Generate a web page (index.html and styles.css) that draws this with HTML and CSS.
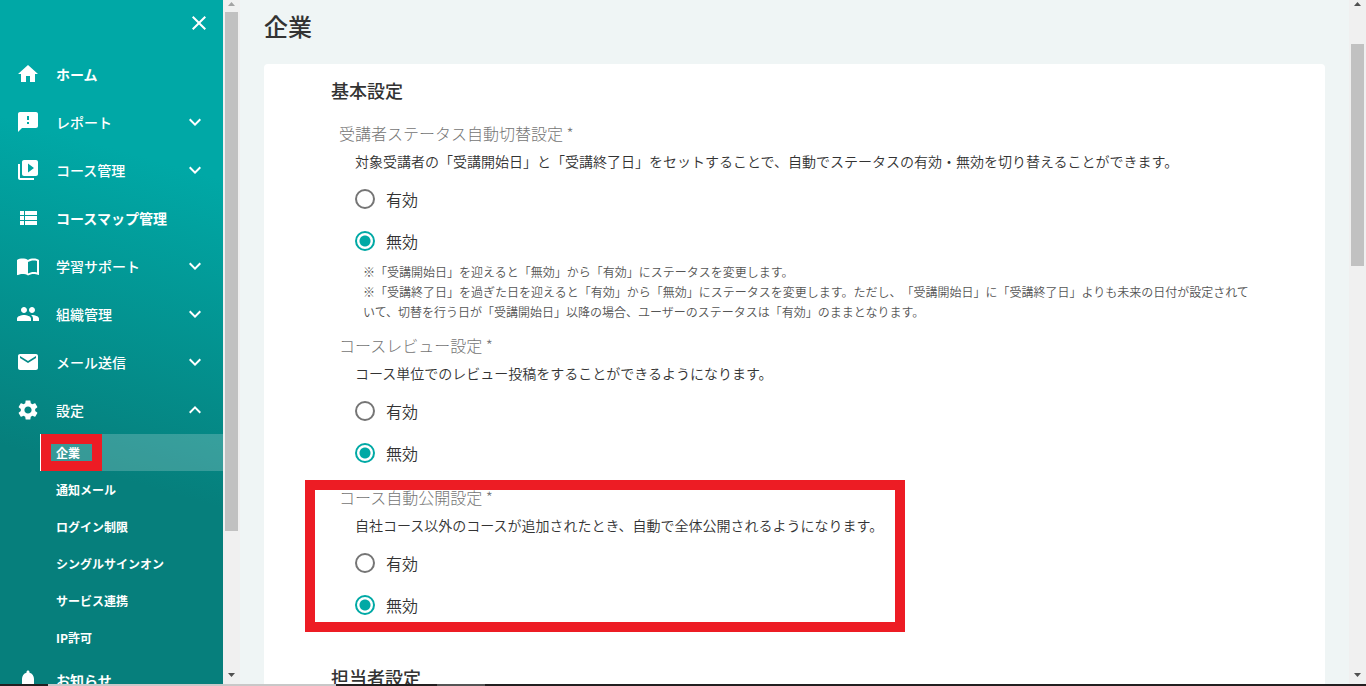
FILE: index.html
```html
<!DOCTYPE html>
<html lang="ja">
<head>
<meta charset="utf-8">
<title>企業</title>
<link rel="stylesheet" href="styles.css">
</head>
<body>
<div class="app">
  <aside class="sidebar">
    <div class="sidebar-head">
      <button class="close" type="button" aria-label="閉じる"><svg class="icon" viewBox="0 0 24 24"><path d="M19 6.41L17.59 5 12 10.59 6.41 5 5 6.41 10.59 12 5 17.59 6.41 19 12 13.41 17.59 19 19 17.59 13.41 12z"/></svg></button>
    </div>
    <nav class="nav">
      <a class="nav-item nav-link" href="#"><svg class="icon" viewBox="0 0 24 24"><path d="M10 20v-6h4v6h5v-8h3L12 3 2 12h3v8z"/></svg><span class="nav-text">ホーム</span></a>
      <a class="nav-item" href="#"><svg class="icon" viewBox="0 0 24 24"><path d="M20 2H4c-1.1 0-1.99.9-1.99 2L2 22l4-4h14c1.1 0 2-.9 2-2V4c0-1.1-.9-2-2-2zm-7 12h-2v-2h2v2zm0-4h-2V6h2v4z"/></svg><span class="nav-text">レポート</span><svg class="chevron" viewBox="0 0 24 24"><path d="M7.41 8.59L12 13.17l4.59-4.58L18 10l-6 6-6-6z"/></svg></a>
      <a class="nav-item" href="#"><svg class="icon" viewBox="0 0 24 24"><path d="M4 6H2v14c0 1.1.9 2 2 2h14v-2H4V6zm16-4H8c-1.1 0-2 .9-2 2v12c0 1.1.9 2 2 2h12c1.1 0 2-.9 2-2V4c0-1.1-.9-2-2-2zm-8 12.5v-9l6 4.5-6 4.5z"/></svg><span class="nav-text">コース管理</span><svg class="chevron" viewBox="0 0 24 24"><path d="M7.41 8.59L12 13.17l4.59-4.58L18 10l-6 6-6-6z"/></svg></a>
      <a class="nav-item nav-link" href="#"><svg class="icon" viewBox="0 0 24 24"><path d="M4 14h4v-4H4v4zm0 5h4v-4H4v4zM4 9h4V5H4v4zm5 5h12v-4H9v4zm0 5h12v-4H9v4zM9 5v4h12V5H9z"/></svg><span class="nav-text">コースマップ管理</span></a>
      <a class="nav-item" href="#"><svg class="icon" viewBox="0 0 24 24"><path d="M21 5c-1.11-.35-2.33-.5-3.5-.5-1.95 0-4.05.4-5.5 1.5-1.45-1.1-3.55-1.5-5.5-1.5S2.45 4.9 1 6v14.65c0 .25.25.5.5.5.1 0 .15-.05.25-.05C3.1 20.45 5.05 20 6.5 20c1.95 0 4.05.4 5.5 1.5 1.35-.85 3.8-1.5 5.5-1.5 1.65 0 3.35.3 4.75 1.05.1.05.15.05.25.05.25 0 .5-.25.5-.5V6c-.6-.45-1.25-.75-2-1zm0 13.5c-1.1-.35-2.3-.5-3.5-.5-1.7 0-4.15.65-5.5 1.5V8c1.35-.85 3.8-1.5 5.5-1.5 1.2 0 2.4.15 3.5.5v11.5z"/></svg><span class="nav-text">学習サポート</span><svg class="chevron" viewBox="0 0 24 24"><path d="M7.41 8.59L12 13.17l4.59-4.58L18 10l-6 6-6-6z"/></svg></a>
      <a class="nav-item" href="#"><svg class="icon" viewBox="0 0 24 24"><path d="M16 11c1.66 0 2.99-1.34 2.99-3S17.66 5 16 5s-3 1.34-3 3 1.34 3 3 3zm-8 0c1.66 0 2.99-1.34 2.99-3S9.66 5 8 5 5 6.34 5 8s1.34 3 3 3zm0 2c-2.33 0-7 1.17-7 3.5V19h14v-2.5c0-2.33-4.67-3.5-7-3.5zm8 0c-.29 0-.62.02-.97.05 1.16.84 1.97 1.97 1.97 3.45V19h6v-2.5c0-2.33-4.67-3.5-7-3.5z"/></svg><span class="nav-text">組織管理</span><svg class="chevron" viewBox="0 0 24 24"><path d="M7.41 8.59L12 13.17l4.59-4.58L18 10l-6 6-6-6z"/></svg></a>
      <a class="nav-item" href="#"><svg class="icon" viewBox="0 0 24 24"><path d="M20 4H4c-1.1 0-1.99.9-1.99 2L2 18c0 1.1.9 2 2 2h16c1.1 0 2-.9 2-2V6c0-1.1-.9-2-2-2zm0 4l-8 5-8-5V6l8 5 8-5v2z"/></svg><span class="nav-text">メール送信</span><svg class="chevron" viewBox="0 0 24 24"><path d="M7.41 8.59L12 13.17l4.59-4.58L18 10l-6 6-6-6z"/></svg></a>
      <a class="nav-item" href="#"><svg class="icon" viewBox="0 0 24 24"><path d="M19.14 12.94c.04-.3.06-.61.06-.94 0-.32-.02-.64-.07-.94l2.03-1.58c.18-.14.23-.41.12-.61l-1.92-3.32c-.12-.22-.37-.29-.59-.22l-2.39.96c-.5-.38-1.03-.7-1.62-.94l-.36-2.54c-.04-.24-.24-.41-.48-.41h-3.84c-.24 0-.43.17-.47.41l-.36 2.54c-.59.24-1.13.57-1.62.94l-2.39-.96c-.22-.08-.47 0-.59.22L2.74 8.87c-.12.21-.08.47.12.61l2.03 1.58c-.05.3-.09.63-.09.94s.02.64.07.94l-2.03 1.58c-.18.14-.23.41-.12.61l1.92 3.32c.12.22.37.29.59.22l2.39-.96c.5.38 1.03.7 1.62.94l.36 2.54c.05.24.24.41.48.41h3.84c.24 0 .44-.17.47-.41l.36-2.54c.59-.24 1.13-.56 1.62-.94l2.39.96c.22.08.47 0 .59-.22l1.92-3.32c.12-.22.07-.47-.12-.61l-2.01-1.58zM12 15.6c-1.98 0-3.6-1.62-3.6-3.6s1.62-3.6 3.6-3.6 3.6 1.62 3.6 3.6-1.62 3.6-3.6 3.6z"/></svg><span class="nav-text">設定</span><svg class="chevron" viewBox="0 0 24 24"><path d="M7.41 15.41L12 10.83l4.59 4.58L18 14l-6-6-6 6z"/></svg></a>
      <div class="subnav">
        <a class="sub-item current" href="#">企業<span class="mark mark-nav"></span></a>
        <a class="sub-item" href="#">通知メール</a>
        <a class="sub-item" href="#">ログイン制限</a>
        <a class="sub-item" href="#">シングルサインオン</a>
        <a class="sub-item" href="#">サービス連携</a>
        <a class="sub-item" href="#">IP許可</a>
      </div>
      <a class="nav-item nav-link" href="#"><svg class="icon" viewBox="0 0 24 24"><path d="M12 22c1.1 0 2-.9 2-2h-4c0 1.100.89 2 2 2zm6-6v-5c0-3.070-1.640-5.640-4.500-6.320V4c0-.83-.67-1.500-1.500-1.500s-1.500.67-1.500 1.500v.68C7.630 5.360 6 7.920 6 11v5l-2 2v1h16v-1l-2-2z"/></svg><span class="nav-text">お知らせ</span></a>
    </nav>
  </aside>
  <div class="scrollbar">
    <svg class="arrow arrow-off" viewBox="0 0 17 12"><path d="M5 6h7L8.500 2z"/></svg>
    <div class="track"><div class="thumb thumb-nav"></div></div>
    <svg class="arrow" viewBox="0 0 17 12"><path d="M5 1h7L8.500 5z"/></svg>
  </div>
  <main class="main">
    <h1 class="page-title">企業</h1>
    <form class="card">
      <h2 class="section-title">基本設定</h2>
      <div class="group" role="radiogroup" aria-labelledby="g1">
        <div class="legend" id="g1">受講者ステータス自動切替設定 *</div>
        <p class="desc">対象受講者の「受講開始日」と「受講終了日」をセットすることで、自動でステータスの有効・無効を切り替えることができます。</p>
        <label class="option"><input class="radio" type="radio" name="status">有効</label>
        <label class="option"><input class="radio" type="radio" name="status" checked>無効</label>
        <p class="note">※「受講開始日」を迎えると「無効」から「有効」にステータスを変更します。<br>※「受講終了日」を過ぎた日を迎えると「有効」から「無効」にステータスを変更します。ただし、「受講開始日」に「受講終了日」よりも未来の日付が設定されていて、切替を行う日が「受講開始日」以降の場合、ユーザーのステータスは「有効」のままとなります。</p>
      </div>
      <div class="group" role="radiogroup" aria-labelledby="g2">
        <div class="legend" id="g2">コースレビュー設定 *</div>
        <p class="desc">コース単位でのレビュー投稿をすることができるようになります。</p>
        <label class="option"><input class="radio" type="radio" name="review">有効</label>
        <label class="option"><input class="radio" type="radio" name="review" checked>無効</label>
      </div>
      <div class="group" role="radiogroup" aria-labelledby="g3">
        <div class="legend" id="g3">コース自動公開設定 *</div>
        <p class="desc">自社コース以外のコースが追加されたとき、自動で全体公開されるようになります。</p>
        <label class="option"><input class="radio" type="radio" name="publish">有効</label>
        <label class="option"><input class="radio" type="radio" name="publish" checked>無効</label>
        <span class="mark mark-group"></span>
      </div>
      <h2 class="section-title next">担当者設定</h2>
    </form>
  </main>
  <div class="scrollbar">
    <svg class="arrow" viewBox="0 0 17 12"><path d="M5 6h7L8.500 2z"/></svg>
    <div class="track"><div class="thumb thumb-page"></div></div>
    <svg class="arrow" viewBox="0 0 17 12"><path d="M5 1h7L8.500 5z"/></svg>
  </div>
</div>
<div class="taskbar"><span class="task-light"></span><span class="task-gray"></span></div>
</body>
</html>
```
FILE: styles.css
```css
* { box-sizing: border-box; }

body {
  margin: 0;
  height: 100vh;
  display: flex;
  flex-direction: column;
  overflow: hidden;
  background: #eff5f5;
  color: #333;
  font-family: "Noto Sans CJK JP", sans-serif;
  font-size: 16px;
  text-spacing-trim: space-all;
}

h1, h2, p { margin: 0; }

.app { flex: 1; min-height: 0; display: flex; }

.sidebar {
  width: 223px;
  flex: none;
  overflow: hidden;
  color: #fff;
  background: linear-gradient(196deg, #00a8a6 24%, #067f7c 68%);
}

.sidebar-head {
  height: 50px;
  display: flex;
  justify-content: flex-end;
  padding: 11px 12px 0 0;
}

.close {
  width: 24px;
  height: 24px;
  padding: 0;
  border: 0;
  background: none;
  color: inherit;
}

.icon { width: 24px; height: 24px; flex: none; display: block; fill: currentColor; }
.chevron { width: 24px; height: 24px; flex: none; fill: currentColor; }

.nav-item {
  height: 48px;
  display: flex;
  align-items: center;
  gap: 16px;
  padding: 0 16px;
  color: inherit;
  font-size: 14px;
  line-height: 20px;
  font-weight: 500;
  text-decoration: none;
}
.nav-link { font-weight: 700; }
.nav-text { flex: 1; }

.subnav { padding-left: 40px; }
.sub-item {
  position: relative;
  height: 37px;
  display: flex;
  align-items: center;
  padding: 0 0 0 16px;
  color: inherit;
  font-size: 12px;
  font-weight: 700;
  text-decoration: none;
}
.current {
  background: rgba(255, 255, 255, 0.2);
  border-left: 1px solid #fff;
  padding-left: 15px;
}

.mark { position: absolute; border: 10px solid #ed1c24; pointer-events: none; }
.mark-nav { inset: 0 auto 0 0; width: 61px; }
.mark-group { top: -5px; bottom: -6px; left: -34px; width: 600px; }

.scrollbar {
  width: 17px;
  flex: none;
  display: flex;
  flex-direction: column;
  background: #f0f0f0;
}
.arrow { width: 17px; height: 12px; flex: none; fill: #505050; }
.arrow-off { fill: #a3a3a3; }
.track { flex: 1; padding: 0 2px; }
.thumb { background: #c1c1c1; }
.thumb-nav { height: 519px; }
.thumb-page { height: 222px; margin-top: 32px; }

.main {
  flex: 1;
  min-width: 0;
  overflow: hidden;
  padding: 8px 24px 0;
}
.page-title { height: 56px; font-size: 24px; line-height: 36px; font-weight: 500; }

.card {
  background: #fff;
  border-radius: 4px;
  padding: 12px 67px 24px;
}
.section-title { font-size: 18px; line-height: 28px; font-weight: 500; margin-bottom: 17px; }
.next { margin-top: 37px; }

.group { position: relative; margin: 0 0 11px 8px; }
.group:last-of-type { margin-bottom: 0; }
.legend { line-height: 24px; color: #757575; font-weight: 300; }
.desc { padding: 6px 0 7px 16px; font-size: 14px; line-height: 20px; font-weight: 350; }
.option {
  height: 42px;
  display: flex;
  align-items: center;
  gap: 11px;
  padding-left: 16px;
  font-weight: 350;
}
.radio {
  appearance: none;
  width: 20px;
  height: 20px;
  margin: 0;
  border: 2px solid #757575;
  border-radius: 50%;
}
.radio:checked {
  border-color: #00a9a5;
  background: radial-gradient(circle, #00a9a5 5px, transparent 6px);
}
.note { padding-left: 24px; font-size: 12px; line-height: 20px; font-weight: 350; color: #555; }

.taskbar { height: 2px; flex: none; display: flex; background: #231f20; padding-left: 48px; }
.task-light { width: 288px; background: #c8c8c8; }
.task-gray { width: 48px; margin-left: 101px; background: #555; }
```
